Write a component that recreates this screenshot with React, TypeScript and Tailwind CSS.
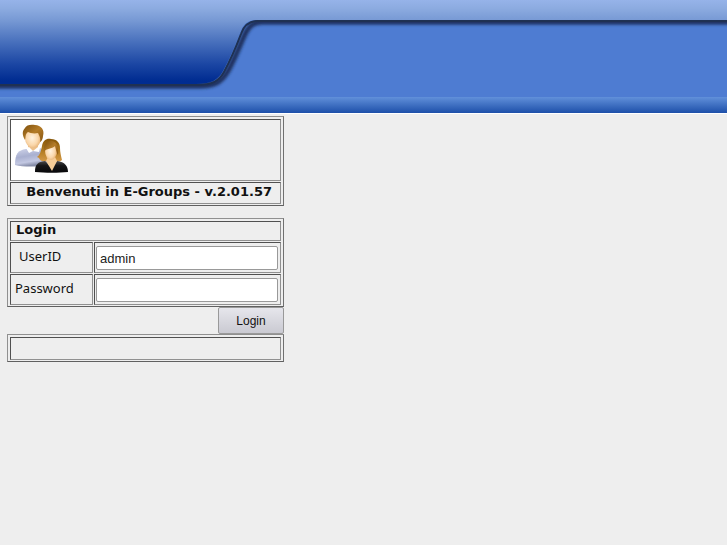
import React, { useState } from "react";

const Banner: React.FC = () => (
  <header className="border-b border-white bg-[#4e7cd2]">
    <svg className="block h-[97px] w-full" aria-hidden="true">
      <defs>
        <linearGradient id="tab" gradientUnits="userSpaceOnUse" x1="0" y1="0" x2="0" y2="85">
          <stop offset="0" stopColor="#96b3e9" />
          <stop offset="0.1" stopColor="#8cabe0" />
          <stop offset="0.24" stopColor="#7799d4" />
          <stop offset="0.5" stopColor="#476fbc" />
          <stop offset="0.75" stopColor="#1c47a4" />
          <stop offset="0.95" stopColor="#002c91" />
        </linearGradient>
        <filter id="soft" x="-5%" y="-20%" width="110%" height="150%">
          <feGaussianBlur stdDeviation="1.4" />
        </filter>
      </defs>
      <path
        d="M-20 86H200C216 86 222 81 228 71C235 58 240 45 245 34C249 26 253 22 263 22H4000"
        fill="none"
        stroke="#1b2f5c"
        strokeWidth="5"
        filter="url(#soft)"
      />
      <path
        d="M-20 -20V84H196C211 84 218 80 223 71C230 58 235 46 240 33C243 24 248 20 258 20H4000V-20Z"
        fill="url(#tab)"
      />
      <path
        d="M-20 85H197C213 85 219 81 224 72C231 59 236 47 241 34C244 25 249 21 258 21H4000"
        fill="none"
        stroke="#1f3153"
        strokeWidth="2"
      />
    </svg>
    <div className="h-4 bg-linear-to-b from-[#6190da] to-[#1d4fa9]" />
  </header>
);

const People: React.FC = () => (
  <svg className="block h-[60px] w-[59px] bg-white" viewBox="0 0 59 60" role="img" aria-label="E-Groups">
    <defs>
      <linearGradient id="shirt" x1="0" y1="0" x2="0.3" y2="1">
        <stop offset="0" stopColor="#d3d7ec" />
        <stop offset="0.5" stopColor="#a9b0d0" />
        <stop offset="0.8" stopColor="#c3c8e2" />
        <stop offset="1" stopColor="#858ca8" />
      </linearGradient>
      <radialGradient id="skin" cx="0.45" cy="0.5" r="0.6">
        <stop offset="0" stopColor="#fff3e0" />
        <stop offset="0.6" stopColor="#fad7ab" />
        <stop offset="1" stopColor="#e0a868" />
      </radialGradient>
      <linearGradient id="hair" x1="0" y1="0" x2="1" y2="1">
        <stop offset="0" stopColor="#7a4d0a" />
        <stop offset="0.5" stopColor="#b47c28" />
        <stop offset="1" stopColor="#875510" />
      </linearGradient>
      <linearGradient id="longHair" x1="0" y1="0" x2="0" y2="1">
        <stop offset="0" stopColor="#855508" />
        <stop offset="0.5" stopColor="#b07a1e" />
        <stop offset="1" stopColor="#d59a48" />
      </linearGradient>
      <linearGradient id="jacket" x1="0" y1="0" x2="0" y2="1">
        <stop offset="0" stopColor="#4a4a4c" />
        <stop offset="0.4" stopColor="#161618" />
        <stop offset="1" stopColor="#08080a" />
      </linearGradient>
    </defs>
    <path d="M4 45C4 34 7 30 15 29L29 28C35 30 37 36 37 45C28 47 12 47 4 45Z" fill="url(#shirt)" />
    <path d="M17 25H27V29L22 31L17 29Z" fill="#ecc08c" />
    <path d="M15 28L18 27L22 31L27 27L29 28L28 32L22 31L18 33Z" fill="#fff" />
    <ellipse cx="22" cy="18" rx="8" ry="10" fill="url(#skin)" />
    <path
      d="M14 20C11 15 11 11 14 8C15 5 20 4 24 5C30 5 34 10 32 16C32 19 30 22 29 22C30 18 28 15 27 13C23 14 19 13 17 12C14 14 15 17 14 20Z"
      fill="url(#hair)"
    />
    <path
      d="M31 26C32 20 36 18 40 19C46 19 49 23 49 28C49 32 50 36 51 40C49 42 46 42 43 41H36C32 42 29 41 28 38L26 37C29 35 30 31 31 26Z"
      fill="url(#longHair)"
    />
    <path d="M24 52C24 44 27 42 34 41L41 48L46 41C54 42 57 46 57 52C48 53 34 53 24 52Z" fill="url(#jacket)" />
    <path d="M37 37H44L46 41L41 51L35 41Z" fill="#f6cd98" />
    <ellipse cx="40" cy="31" rx="6" ry="9" fill="url(#skin)" />
    <path d="M33 32C32 25 36 20 41 21C46 22 48 27 47 35C45 32 45 29 44 26C41 29 35 28 33 32Z" fill="url(#hair)" />
  </svg>
);

type BoxProps = {
  className?: string;
  children?: React.ReactNode;
};

// Raised outer frame, holds sunken cells
const Panel: React.FC<BoxProps> = ({ className = "", children }) => (
  <div
    className={`flex flex-col gap-px border border-t-[#909090] border-r-[#707070] border-b-[#606060] border-l-[#909090] px-0.5 pt-0.5 pb-px ${className}`}
  >
    {children}
  </div>
);

const Cell: React.FC<BoxProps> = ({ className = "", children }) => (
  <div
    className={`border border-t-[#505050] border-r-[#909090] border-b-[#909090] border-l-[#505050] ${className}`}
  >
    {children}
  </div>
);

const inputClass =
  "block h-6 w-full rounded-xs border border-[#999] bg-white px-[3px] font-['Liberation_Sans',sans-serif] text-[13px] text-[#222] outline-none";

const App: React.FC = () => {
  const [userId, setUserId] = useState("admin");
  const [password, setPassword] = useState("");

  return (
    <div className="min-h-screen bg-[#eee] font-['DejaVu_Sans',sans-serif] text-[13px] leading-4 text-[#111]">
      <Banner />
      <main className="ml-[7px] max-w-[277px] pt-0.5">
        <Panel>
          <Cell>
            <People />
          </Cell>
          <Cell className="h-[22px] pt-px pr-2 text-right">
            <h1 className="font-bold whitespace-nowrap">Benvenuti in E-Groups - v.2.01.57</h1>
          </Cell>
        </Panel>

        <form className="mt-3" onSubmit={(e) => e.preventDefault()}>
          <Panel>
            <Cell className="h-5 px-[5px]">
              <h2 className="font-bold">Login</h2>
            </Cell>
            <div className="grid grid-cols-[83px_1fr] gap-px font-['Noto_Sans',sans-serif]">
              <Cell className="h-[31px] px-2 pt-[5px]">
                <label htmlFor="userid" className="block">UserID</label>
              </Cell>
              <Cell className="pt-[3px] pr-0.5 pl-px">
                <input
                  id="userid"
                  type="text"
                  className={inputClass}
                  value={userId}
                  onChange={(e) => setUserId(e.target.value)}
                />
              </Cell>
              <Cell className="h-[31px] px-1 pt-[5px]">
                <label htmlFor="password" className="block">Password</label>
              </Cell>
              <Cell className="pt-[3px] pr-0.5 pl-px">
                <input
                  id="password"
                  type="password"
                  className={inputClass}
                  value={password}
                  onChange={(e) => setPassword(e.target.value)}
                />
              </Cell>
            </div>
          </Panel>
          <div className="flex justify-end">
            <button
              type="submit"
              className="h-[27px] w-[66px] rounded-xs border border-[#999] bg-linear-to-b from-[#e6e6ec] to-[#cacad2] font-['Liberation_Sans',sans-serif] text-xs"
            >
              Login
            </button>
          </div>
        </form>

        <Panel>
          <Cell className="h-[23px]" />
        </Panel>
      </main>
    </div>
  );
};

export default App;
